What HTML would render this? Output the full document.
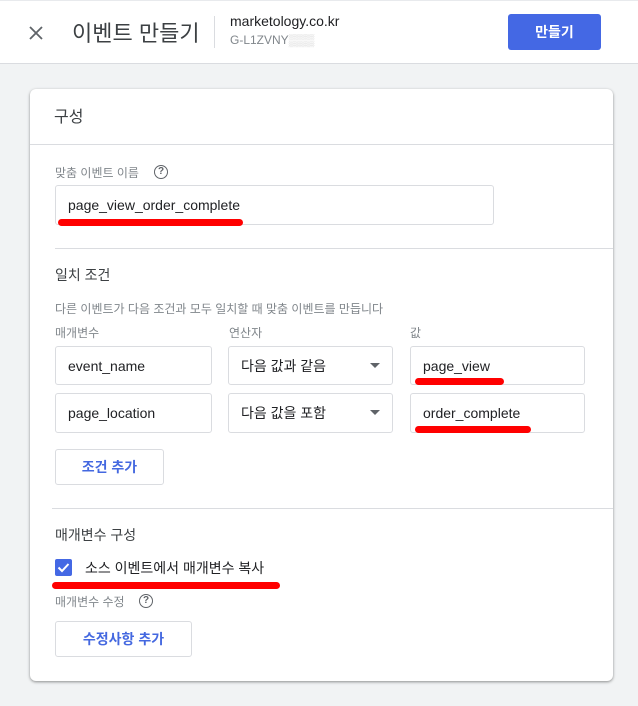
<!DOCTYPE html>
<html><head><meta charset="utf-8"><style>
*{box-sizing:border-box;margin:0;padding:0}
body{width:638px;height:706px;background:#f1f3f4;font-family:"Liberation Sans","Noto Sans CJK KR",sans-serif;position:relative;overflow:hidden;color:#202124}
.a{position:absolute}
.hdr{left:0;top:0;width:638px;height:64px;background:#fff;border-bottom:1px solid #dadce0;border-top:1px solid #e8eaed}
.card{left:30px;top:89px;width:583px;height:592px;background:#fff;border-radius:6px;box-shadow:0 1px 3px rgba(0,0,0,.3),0 1px 2px rgba(0,0,0,.15)}
.hr{height:1px;background:#dadce0}
.inp{border:1px solid #dadce0;border-radius:3px;background:#fff;font-size:14px;padding-left:12px;display:flex;align-items:center;color:#202124}
.lbl{font-size:12px;color:#80868b}
.sec{font-size:14px;color:#3c4043}
.btn{border:1px solid #dadce0;border-radius:3px;background:#fff;color:#4468e0;font-size:14px;font-weight:bold;display:flex;align-items:center;justify-content:center}
.red{background:#f00;border-radius:4px;height:7px}
.q{width:14px;height:14px;border:1.5px solid #5f6368;border-radius:50%;font-size:10px;font-weight:bold;color:#5f6368;text-align:center;line-height:11px}
.arr{width:0;height:0;border-left:5px solid transparent;border-right:5px solid transparent;border-top:5px solid #5f6368}
</style></head><body>
<div class="a hdr"></div>
<svg class="a" style="left:28px;top:25px" width="16" height="16"><path d="M2 2L14 14M14 2L2 14" stroke="#5f6368" stroke-width="1.8"/></svg>
<div class="a" style="left:72px;top:16px;font-size:22px;color:#3c4043">이벤트 만들기</div>
<div class="a" style="left:214px;top:16px;width:1px;height:32px;background:#dadce0"></div>
<div class="a" style="left:230px;top:13px;font-size:14px;color:#202124">marketology.co.kr</div>
<div class="a" style="left:230px;top:33px;font-size:12px;color:#80868b">G-L1ZVNY<span style="color:#d0d0d0">▒▒▒</span></div>
<div class="a" style="left:508px;top:14px;width:93px;height:36px;background:#4468e4;border-radius:3px;color:#fff;font-size:14px;font-weight:bold;display:flex;align-items:center;justify-content:center">만들기</div>

<div class="a card"></div>
<div class="a" style="left:54px;top:103px;font-size:16px;color:#3c4043">구성</div>
<div class="a hr" style="left:30px;top:144px;width:583px"></div>
<div class="a lbl" style="left:55px;top:164px">맞춤 이벤트 이름</div>
<div class="a q" style="left:154px;top:165px">?</div>
<div class="a inp" style="left:55px;top:185px;width:439px;height:40px">page_view_order_complete</div>
<div class="a red" style="left:58px;top:219px;width:185px"></div>
<div class="a hr" style="left:55px;top:248px;width:558px"></div>
<div class="a sec" style="left:55px;top:265px">일치 조건</div>
<div class="a lbl" style="left:55px;top:300px">다른 이벤트가 다음 조건과 모두 일치할 때 맞춤 이벤트를 만듭니다</div>
<div class="a lbl" style="left:55px;top:324px">매개변수</div>
<div class="a lbl" style="left:229px;top:324px">연산자</div>
<div class="a lbl" style="left:410px;top:324px">값</div>
<div class="a inp" style="left:55px;top:346px;width:157px;height:39px">event_name</div>
<div class="a inp" style="left:228px;top:346px;width:165px;height:39px">다음 값과 같음</div>
<div class="a arr" style="left:370px;top:363px"></div>
<div class="a inp" style="left:410px;top:346px;width:175px;height:39px">page_view</div>
<div class="a red" style="left:415px;top:378px;width:89px"></div>
<div class="a inp" style="left:55px;top:393px;width:157px;height:40px">page_location</div>
<div class="a inp" style="left:228px;top:393px;width:165px;height:40px">다음 값을 포함</div>
<div class="a arr" style="left:370px;top:410px"></div>
<div class="a inp" style="left:410px;top:393px;width:175px;height:40px">order_complete</div>
<div class="a red" style="left:415px;top:426px;width:116px"></div>
<div class="a btn" style="left:55px;top:449px;width:109px;height:36px">조건 추가</div>
<div class="a hr" style="left:52px;top:508px;width:561px"></div>
<div class="a sec" style="left:55px;top:525px">매개변수 구성</div>
<div class="a" style="left:55px;top:559px;width:17px;height:17px;background:#4468e4;border-radius:2px"></div>
<svg class="a" style="left:55px;top:559px" width="17" height="17"><path d="M3.5 8.5L7 12L13.5 5" stroke="#fff" stroke-width="2" fill="none"/></svg>
<div class="a" style="left:85px;top:558px;font-size:14px;color:#202124">소스 이벤트에서 매개변수 복사</div>
<div class="a red" style="left:52px;top:582px;width:228px"></div>
<div class="a lbl" style="left:55px;top:593px">매개변수 수정</div>
<div class="a q" style="left:139px;top:594px">?</div>
<div class="a btn" style="left:55px;top:621px;width:137px;height:36px">수정사항 추가</div>
</body></html>
